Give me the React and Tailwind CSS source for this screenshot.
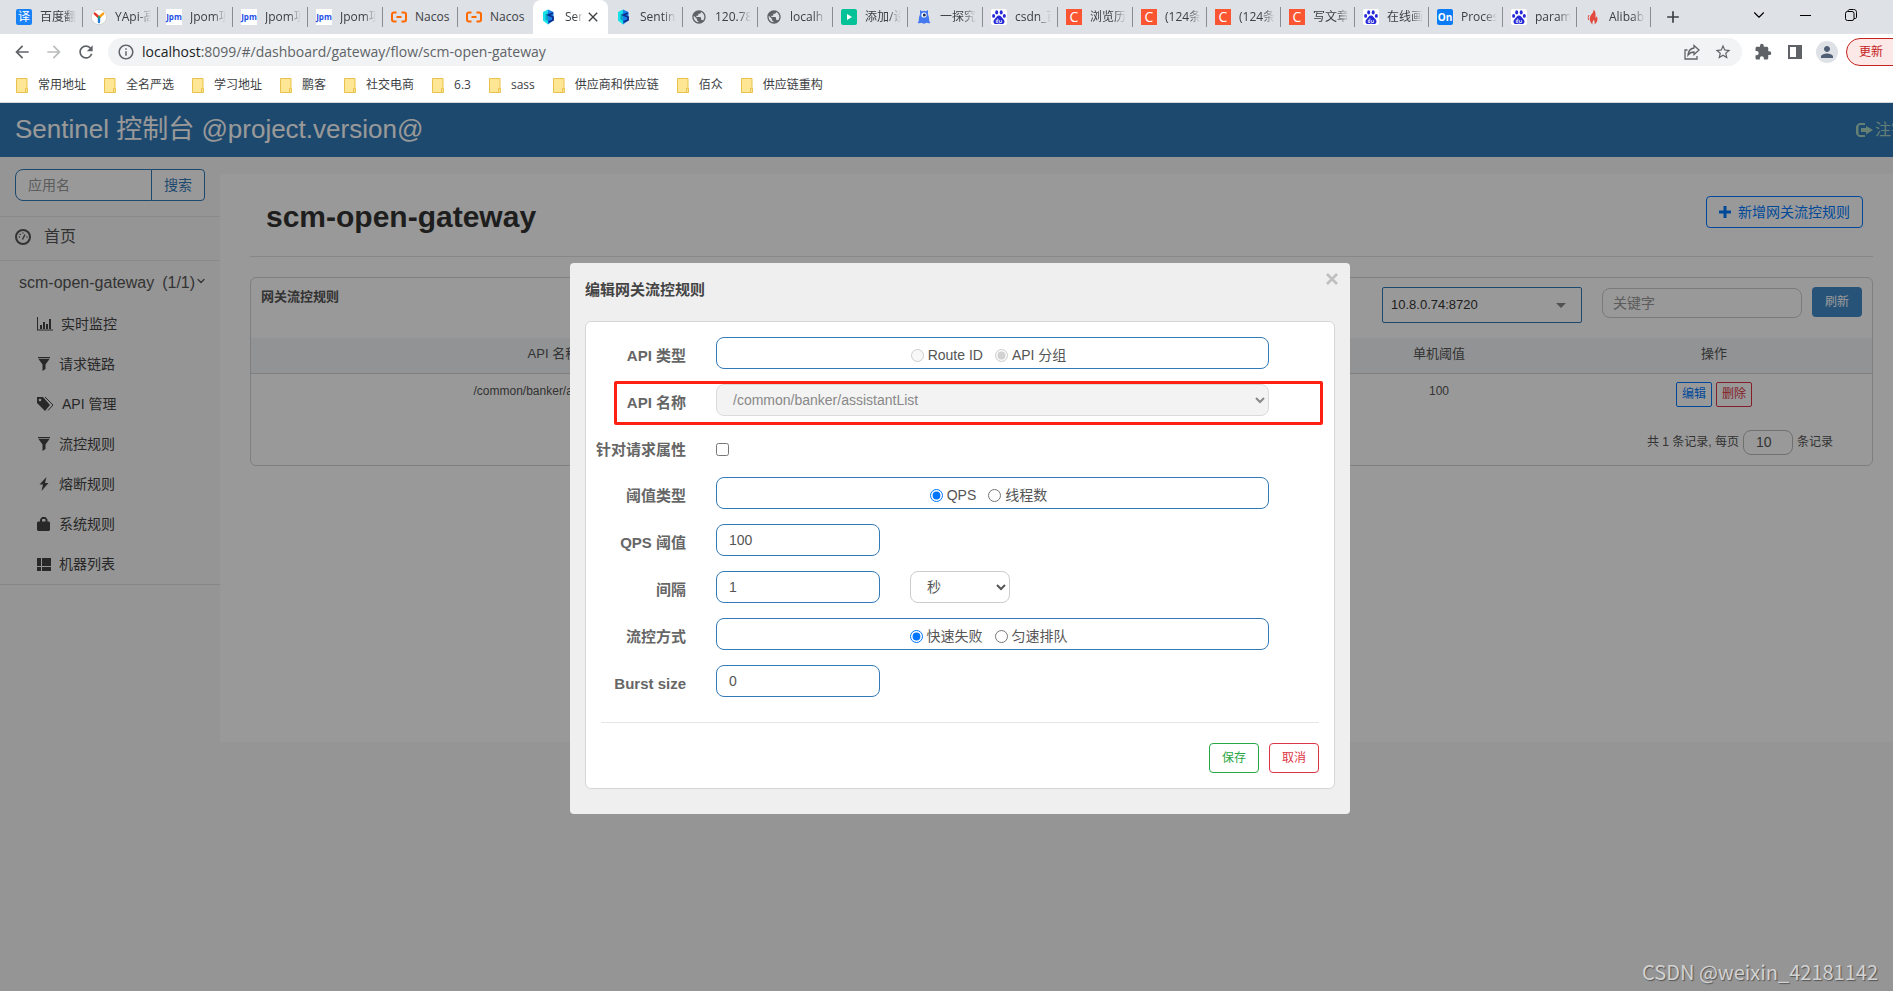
import { useState } from 'react'
import {
  MdArrowBack, MdArrowForward, MdRefresh, MdInfoOutline, MdStarBorder,
  MdExtension, MdPerson, MdPublic, MdAdd, MdClose,
} from 'react-icons/md'
import { ChevronDown } from 'lucide-react'

/* ---------- favicons ---------- */

function Letter({ bg, children }) {
  return (
    <span className={`flex h-4 w-4 items-center justify-center leading-4 text-white ${bg}`}>
      {children}
    </span>
  )
}

function Csdn() {
  return <Letter bg="bg-[#fc5531] text-[14px] font-medium">C</Letter>
}

function Baidu() {
  return (
    <svg viewBox="0 0 16 16" className="h-4 w-4">
      <rect width="16" height="16" rx="2" fill="#fff" />
      <g fill="#2529d8">
        <ellipse cx="5.7" cy="3.4" rx="1.5" ry="2.1" />
        <ellipse cx="10.2" cy="3.4" rx="1.5" ry="2.1" />
        <ellipse cx="2.6" cy="6.9" rx="1.5" ry="1.9" />
        <ellipse cx="13.3" cy="6.9" rx="1.5" ry="1.9" />
        <path d="M8 6.6c2.2 0 2.6 2 4.2 3.3 2.200 1.900 1.300 5.100-1 5.100-1.300 0-1.900-.3-3.200-.3s-1.900.3-3.200.3c-2.300 0-3.200-3.200-1-5.100C5.400 8.600 5.800 6.600 8 6.600z" />
      </g>
      <path d="M6.900 9.500v4M6.900 11.200H5.300v2.300h1.600M8.600 11.200v2.300h2v-2.300" fill="none" stroke="#fff" strokeWidth=".8" />
    </svg>
  )
}

function YApi() {
  return (
    <svg viewBox="0 0 16 16" className="h-4 w-4">
      <circle cx="8" cy="8" r="7.600" fill="#fff" stroke="#c4c4c4" strokeWidth=".6" />
      <path d="M8 8.500L3.800 4.600" stroke="#e5352b" strokeWidth="2.400" strokeLinecap="round" />
      <path d="M8 8.500l4.200-3.900" stroke="#f9a01b" strokeWidth="2.400" strokeLinecap="round" />
      <path d="M8 8.500V13" stroke="#1f7ad6" strokeWidth="2.400" strokeLinecap="round" />
      <circle cx="8" cy="8.500" r="1.200" fill="#22a565" />
    </svg>
  )
}

function Jpom() {
  return (
    <span className="flex h-4 w-4 items-center justify-center bg-white text-[8px] leading-4 font-bold text-[#2450e8]">
      Jpm
    </span>
  )
}

function Nacos() {
  return (
    <svg viewBox="0 0 16 16" className="h-4 w-4" fill="none" stroke="#ff6a00" strokeWidth="2">
      <path d="M5.500 3.500H3C1.600 3.500 1 4.200 1 5.500v5c0 1.300.6 2 2 2h2.500M10.500 3.500H13c1.400 0 2 .7 2 2v5c0 1.300-.6 2-2 2h-2.500M5.500 8h5" />
    </svg>
  )
}

function Sentinel() {
  return (
    <svg viewBox="0 0 16 16" className="h-4 w-4">
      <path d="M7 .5L2 3v8.500l5 4z" fill="#18e0e6" />
      <path d="M7 .5l5.500 2.500v8.500L7 15.500z" fill="#1783e8" />
      <path d="M4.500 5.500L7 4v8l-2.500-1.500z" fill="#0aa5c4" />
      <path d="M12 4L7.500 6l4.500 2v3l-4.500 2" fill="none" stroke="#0c2d8b" strokeWidth="1.800" />
    </svg>
  )
}

function Globe() {
  return <MdPublic className="h-[18px] w-[18px] text-[#5f6368]" />
}

function Play() {
  return (
    <svg viewBox="0 0 16 16" className="h-4 w-4">
      <rect width="16" height="16" rx="2" fill="#04c297" />
      <path d="M6 5v6l5-3z" fill="#fff" />
    </svg>
  )
}

function Monster() {
  return (
    <svg viewBox="0 0 16 16" className="h-4 w-4">
      <path d="M4 1l2 1.300a4.500 4.500 0 014 0L12 1v4.500c1 2 1.200 4.500 1.200 6.500l1.300 2-2 .3-1.700-.6-2.800 1-2.800-1-1.700.6-2-.3 1.300-2C2.800 10 3 7.500 4 5.500z" fill="#4478f0" />
      <circle cx="8" cy="6" r="2.600" fill="#fff" />
      <circle cx="8.300" cy="6" r="1.500" fill="#1d2b55" />
    </svg>
  )
}

function Flame() {
  return (
    <svg viewBox="0 0 16 16" className="h-4 w-4">
      <path d="M8.500.5c1 3-3.800 5-3.800 9.300 0 2.500 1.300 4.500 2.900 5.700-.6-2 .1-3.200 1.400-4.700.3 1.600 1 2.500.6 4.500 2-1.300 3.200-3.400 2.800-6-.2-1-.5-1.700-.9-2.300-.1 1-.5 1.500-1.100 1.900C10.700 5.500 10.800 2 8.500.5z" fill="#e2493f" />
      <path d="M4 6c-.8 1.600-.9 3.300-.3 5" fill="none" stroke="#e2493f" strokeWidth="1" />
    </svg>
  )
}

const tabs = [
  { icon: <Letter bg="rounded-xs bg-[#1a82f7] text-[12px]">译</Letter>, title: '百度翻' },
  { icon: <YApi />, title: 'YApi-高' },
  { icon: <Jpom />, title: 'Jpom项' },
  { icon: <Jpom />, title: 'Jpom项' },
  { icon: <Jpom />, title: 'Jpom项' },
  { icon: <Nacos />, title: 'Nacos', plain: true },
  { icon: <Nacos />, title: 'Nacos', plain: true },
  { icon: <Sentinel />, title: 'Sen', active: true },
  { icon: <Sentinel />, title: 'Sentin' },
  { icon: <Globe />, title: '120.78' },
  { icon: <Globe />, title: 'localh' },
  { icon: <Play />, title: '添加/设' },
  { icon: <Monster />, title: '一探究' },
  { icon: <Baidu />, title: 'csdn_百' },
  { icon: <Csdn />, title: '浏览历' },
  { icon: <Csdn />, title: '(124条' },
  { icon: <Csdn />, title: '(124条' },
  { icon: <Csdn />, title: '写文章' },
  { icon: <Baidu />, title: '在线画' },
  { icon: <Letter bg="rounded-xs bg-[#0a7cf5] font-bold text-[10px]">On</Letter>, title: 'Proces' },
  { icon: <Baidu />, title: 'param' },
  { icon: <Flame />, title: 'Alibab' },
]

const bookmarks = ['常用地址', '全名严选', '学习地址', '鹏客', '社交电商', '6.3', 'sass', '供应商和供应链', '佰众', '供应链重构']

function Tab({ icon, title, active, plain, divider, width }) {
  if (active) {
    return (
      <div className={`flex h-full items-center rounded-t-lg bg-white pl-2 ${width}`}>
        <span className="shrink-0">{icon}</span>
        <span className="ml-2 w-5 overflow-hidden whitespace-nowrap mask-r-from-50% mask-r-to-90%">{title}</span>
        <button type="button" aria-label="关闭标签页">
          <MdClose className="h-4 w-4 text-[#3c4043]" />
        </button>
      </div>
    )
  }
  return (
    <div className={`flex h-full items-center pl-2 ${width}`}>
      <span className="flex w-4 shrink-0 justify-center">{icon}</span>
      <span className={`ml-2 w-9 overflow-hidden whitespace-nowrap ${plain ? '' : 'mask-r-from-65% mask-r-to-100%'}`}>
        {title}
      </span>
      <span className={`ml-auto h-5 w-px ${divider ? 'bg-[#8a8d91]' : ''}`} />
    </div>
  )
}

function BrowserBar() {
  return (
    <header className="shrink-0 border-b border-[#d5d7da] bg-white font-['Open_Sans','Noto_Sans_CJK_SC',sans-serif] text-[12px] text-[#3c4043]">
      <div className="flex h-[34px] items-center bg-[#dee1e6] pl-2">
        <div className="flex h-full items-center">
          {tabs.map((tab, i) => (
            <Tab key={i} {...tab} width={i < 15 ? 'w-[75px]' : 'w-[74px]'} divider={!tabs[i + 1]?.active} />
          ))}
        </div>
        <div className="flex flex-1 items-center pb-1">
          <button type="button" aria-label="新标签页" className="mt-1 ml-3"><MdAdd className="h-5 w-5" /></button>
          <button type="button" aria-label="搜索标签页" className="ml-[67px]"><ChevronDown className="h-[18px] w-[18px] text-black" strokeWidth={1.5} /></button>
          <button type="button" aria-label="最小化" className="ml-8 h-px w-[11px] bg-black" />
          <button type="button" aria-label="还原" className="ml-[34px]">
            <svg viewBox="0 0 12 12" className="h-3 w-3" fill="none" stroke="#000">
              <rect x=".5" y="2.500" width="8.500" height="9" rx="2" />
              <path d="M3 2.500V2C3 1 4 .5 5 .5h3.500c2 0 3 1 3 3V8c0 1-.5 1.500-1.500 1.500H9" />
            </svg>
          </button>
          <button type="button" aria-label="关闭" className="ml-[34px]"><MdClose className="h-4 w-4 text-black" /></button>
        </div>
      </div>

      <div className="flex h-9 items-center pl-3 text-[#5f6368]">
        <button type="button" aria-label="后退"><MdArrowBack className="h-5 w-5" /></button>
        <button type="button" aria-label="前进" className="ml-3"><MdArrowForward className="h-5 w-5 text-[#babcbe]" /></button>
        <button type="button" aria-label="刷新页面" className="ml-3"><MdRefresh className="h-5 w-5" /></button>
        <div className="ml-3 flex h-7 flex-1 items-center rounded-full bg-[#f1f3f4] pr-[10px] pl-[9px]">
          <MdInfoOutline className="h-[18px] w-[18px]" />
          <p className="ml-[7px] flex-1 pb-px text-[14px]">
            <span className="text-[#202124]">localhost</span>:8099/#/dashboard/gateway/flow/scm-open-gateway
          </p>
          <button type="button" aria-label="分享">
            <svg viewBox="0 0 16 16" className="h-4 w-4" fill="none" stroke="#5f6368" strokeWidth="1.300">
              <path d="M3.500 6H1v9h12v-3M10 1.500l5 4.500-5 4.500V8c-3 0-4.500 1-6 3 .3-3.500 2.500-6.500 6-7z" />
            </svg>
          </button>
          <button type="button" aria-label="收藏" className="ml-[14px]"><MdStarBorder className="h-[18px] w-[18px]" /></button>
        </div>
        <button type="button" aria-label="扩展程序" className="ml-3"><MdExtension className="h-[18px] w-[18px]" /></button>
        <button type="button" aria-label="侧边栏" className="ml-4">
          <svg viewBox="0 0 14 14" className="h-[14px] w-[14px]">
            <path d="M0 0h14v14H0z" fill="#5f6368" />
            <path d="M2 2h6v10H2z" fill="#fff" />
          </svg>
        </button>
        <button type="button" aria-label="用户" className="ml-[14px] flex h-[22px] w-[22px] items-center justify-center rounded-full bg-[#dee1e6]">
          <MdPerson className="h-[18px] w-[18px] text-[#4f5d75]" />
        </button>
        <button type="button" className="ml-2 h-7 w-[74px] rounded-full border border-[#c5221f] bg-[#fce8e6] pl-3 text-left text-[#c5221f]">
          更新
        </button>
      </div>

      <nav className="flex h-8 items-center pb-[2px] pl-4">
        {bookmarks.map((name) => (
          <a key={name} href="#" className="mr-[18px] flex items-center whitespace-nowrap">
            <svg viewBox="0 0 12 15" className="mr-[10px] h-[15px] w-3">
              <path d="M.5.5h10.500v14H.5z" fill="#ffe694" stroke="#e8c24c" />
              <path d="M9.500 10.500h2v4h-2z" fill="#ffe694" stroke="#e8c24c" />
            </svg>
            {name}
          </a>
        ))}
      </nav>
    </header>
  )
}

/* ---------- sidebar ---------- */

const glyphs = {
  stats: (
    <svg viewBox="0 0 16 14" className="h-[14px] w-4" fill="currentColor">
      <path d="M0 0h1v12.500h15v1H0zM3 8h2v4H3zM6 5h2v7H6zM9 7h2v5H9zM12 2h2v10h-2z" />
    </svg>
  ),
  filter: (
    <svg viewBox="0 0 14 14" className="h-[14px] w-[14px]" fill="currentColor">
      <path d="M1 0h12v1.200H1zM1.500 2h11L8.500 7.500V12L5.500 14V7.500z" />
    </svg>
  ),
  tags: (
    <svg viewBox="0 0 17 14" className="h-[14px] w-[17px]" fill="currentColor">
      <path fillRule="evenodd" d="M0 0h6l7 8-5 6-8-8zM3 1.700a1.300 1.300 0 100 2.600 1.300 1.300 0 000-2.600z" />
      <path d="M8 0l8 8-5 5.500" fill="none" stroke="currentColor" />
    </svg>
  ),
  flash: (
    <svg viewBox="0 0 14 14" className="h-[14px] w-[14px]" fill="currentColor">
      <path d="M9.500 0L2.500 7.500h3.500L4.500 14l7-8H8z" />
    </svg>
  ),
  lock: (
    <svg viewBox="0 0 14 14" className="h-[14px] w-[14px]" fill="currentColor">
      <path fillRule="evenodd" d="M3 4.500V2.500L5 0h3.500l2 2.500v2H12l1 1V13l-1 1H1l-1-1V5.500l1-1zM5 4.500h3.500V2.800L8 2H5.500L5 2.800z" />
    </svg>
  ),
  list: (
    <svg viewBox="0 0 14 14" className="h-[14px] w-[14px]" fill="currentColor">
      <path d="M0 1h4v8H0zM5 1h9v8H5zM0 10h4v4H0zM5 10h9v4H5z" />
    </svg>
  ),
}

const menu = [
  ['stats', '实时监控'],
  ['filter', '请求链路'],
  ['tags', 'API 管理'],
  ['filter', '流控规则'],
  ['flash', '熔断规则'],
  ['lock', '系统规则'],
  ['list', '机器列表'],
]

function Sidebar() {
  return (
    <aside className="w-[220px] shrink-0">
      <form className="flex px-[15px] pt-3 pb-[15px]">
        <input
          type="text"
          aria-label="应用名"
          placeholder="应用名"
          className="h-8 min-w-0 flex-1 rounded-l-lg border border-[#337ab7] bg-white px-3 text-[14px] placeholder:text-[#999]"
        />
        <button type="button" className="-ml-px h-8 w-[54px] rounded-r border border-[#337ab7] bg-white text-[14px] text-[#337ab7]">
          搜索
        </button>
      </form>
      <nav className="border-b border-[#e0e0e0] text-[#555]">
        <a href="#" className="flex h-[45px] items-center border-y border-[#e7e7e7] pb-1 pl-[15px] text-[16px]">
          <svg viewBox="0 0 16 16" className="mr-[13px] h-4 w-4" fill="none" stroke="currentColor">
            <circle cx="8" cy="8" r="7" strokeWidth="2" />
            <path d="M7.500 10.500l2.500-5M3.800 8h1.200M11.500 8h1M4.800 5l.8.8M8 3.500v1" strokeWidth="1.400" />
          </svg>
          首页
        </a>
        <a href="#" className="flex h-[43px] items-center pl-[19px] text-[16px]">
          scm-open-gateway
          <span className="ml-2">(1/1)</span>
          <ChevronDown className="-mt-1 h-3 w-3" strokeWidth={2.5} />
        </a>
        <ul>
          {menu.map(([icon, text]) => (
            <li key={text}>
              <a href="#" className="flex h-10 items-center gap-2 pl-[37px] text-[14px] text-[#444]">
                {glyphs[icon]}
                {text}
              </a>
            </li>
          ))}
        </ul>
      </nav>
    </aside>
  )
}

/* ---------- rules page ---------- */

function RulesPage() {
  return (
    <main className="mt-[17px] min-h-[568px] flex-1 bg-white pr-[47px] pl-[30px] text-[#555]">
      <div className="flex h-[83px] items-start justify-between border-b border-[#e2e2e2] pr-[10px] pl-4">
        <h1 className="mt-[25px] text-[30px] leading-9 font-bold text-[#333]">scm-open-gateway</h1>
        <button type="button" className="mt-[22px] flex h-8 items-center rounded border border-[#007bff] px-3 text-[14px] text-[#007bff]">
          <svg viewBox="0 0 12 12" className="mr-[7px] h-3 w-3" fill="currentColor">
            <path d="M4.500 0h3v4.500H12v3H7.500V12h-3V7.500H0v-3h4.500z" />
          </svg>
          新增网关流控规则
        </button>
      </div>

      <section className="mt-5 rounded-md border border-[#d4d4d4]">
        <div className="flex h-[60px] items-start pr-[10px] pl-[10px]">
          <h2 className="mt-[9px] text-[13px] font-bold">网关流控规则</h2>
          <select aria-label="机器" className="mt-[9px] ml-auto h-9 w-[200px] appearance-none rounded-xs border border-[#337ab7] px-2 text-[13px] text-[#333]">
            <option>10.8.0.74:8720</option>
          </select>
          <svg viewBox="0 0 10 5" className="mt-[25px] -ml-[26px] h-[5px] w-[10px]" fill="#888"><path d="M0 0h10L5 5z" /></svg>
          <input
            type="text"
            aria-label="关键字"
            placeholder="关键字"
            className="mt-[10px] ml-9 h-[30px] w-[200px] rounded-lg border border-[#ccc] px-[10px] text-[14px] placeholder:text-[#999]"
          />
          <button type="button" className="mt-[9px] ml-[10px] h-[30px] w-[50px] rounded bg-[#428bca] text-[12px] text-white">
            刷新
          </button>
        </div>
        <table className="w-full table-fixed text-center">
          <thead>
            <tr className="h-[35px] border-b border-[#d4d4d4] bg-[#f3f6f8] text-[13px]">
              <th className="w-[37%] pb-1 pl-1 font-normal">API 名称</th>
              <td colSpan={2} />
              <th className="w-[234px] pb-1 font-normal">单机阈值</th>
              <th className="w-[316px] pb-1 font-normal">操作</th>
            </tr>
          </thead>
          <tbody>
            <tr className="h-[46px] align-top text-[12px]">
              <td className="pt-2 pl-1">/common/banker/assistantList</td>
              <td colSpan={2} />
              <td className="pt-2">100</td>
              <td className="pt-2">
                <span className="flex justify-center gap-1">
                  <button type="button" className="h-[25px] w-9 rounded-xs border border-[#007bff] text-[#007bff]">编辑</button>
                  <button type="button" className="h-[25px] w-9 rounded-xs border border-[#dc3545] text-[#dc3545]">删除</button>
                </span>
              </td>
            </tr>
          </tbody>
        </table>
        <div className="flex h-[46px] items-center justify-end gap-1 pr-[39px] text-[12px]">
          <label htmlFor="pageSize">共 1 条记录, 每页</label>
          <input
            id="pageSize"
            type="text"
            defaultValue="10"
            className="h-[25px] w-[50px] rounded-lg border border-[#bbb] px-3 text-[14px]"
          />
          <span>条记录</span>
        </div>
      </section>
    </main>
  )
}

/* ---------- edit dialog ---------- */

function Field({ label, htmlFor, highlight, children }) {
  return (
    <div className="relative flex min-h-[31px]">
      <label htmlFor={htmlFor} className="w-[100px] shrink-0 pt-2 text-right text-[15px] leading-[22px] font-bold text-[#666]">
        {label}
      </label>
      <div className="mr-[65px] ml-[30px] flex flex-1">{children}</div>
      {highlight && (
        <span className="pointer-events-none absolute -top-[3px] right-[11px] -bottom-[9px] left-7 rounded-xs border-3 border-[#ff2012]" />
      )}
    </div>
  )
}

function RadioBox({ name, options, value, onChange, disabled }) {
  return (
    <div className="flex h-8 flex-1 items-center justify-center gap-3 rounded-lg border border-[#337ab7] pt-1 pr-2 text-[14px] text-[#555]">
      {options.map((opt) => (
        <label key={opt} className="flex items-center gap-1">
          <input
            type="radio"
            name={name}
            className="h-[13px] w-[13px]"
            checked={value === opt}
            onChange={() => onChange(opt)}
            disabled={disabled}
          />
          {opt}
        </label>
      ))}
    </div>
  )
}

function EditDialog() {
  const [form, setForm] = useState({
    apiType: 'API 分组',
    byParam: false,
    grade: 'QPS',
    count: '100',
    interval: '1',
    unit: '秒',
    behavior: '快速失败',
    burst: '0',
  })
  const set = (key) => (value) => setForm((f) => ({ ...f, [key]: value }))

  const inputClass = 'h-8 w-[164px] rounded-lg border border-[#337ab7] px-3 text-[14px] text-[#555]'

  return (
    <div role="dialog" aria-label="编辑网关流控规则" className="w-[780px] rounded bg-[#efefef] px-[15px] pb-[25px]">
      <div className="flex h-[58px] items-start justify-between">
        <h2 className="mt-4 text-[15px] font-bold text-[#444]">编辑网关流控规则</h2>
        <button type="button" aria-label="关闭对话框" className="mt-[9px] -mr-1">
          <svg viewBox="0 0 12 12" className="m-[1px] h-3 w-3" stroke="#bfbfbf" strokeWidth="2.600">
            <path d="M1 1l10 10M11 1L1 11" />
          </svg>
        </button>
      </div>
      <form className="rounded-md border border-[#d6d6d6] bg-white pt-[15px] pb-[15px]">
        <div className="flex flex-col gap-[15px]">
          <Field label="API 类型">
            <RadioBox name="apiType" options={['Route ID', 'API 分组']} value={form.apiType} onChange={set('apiType')} disabled />
          </Field>
          <Field label="API 名称" htmlFor="apiName" highlight>
            <select id="apiName" disabled className="h-8 flex-1 rounded-lg border border-[#dbdbdb] bg-[#f3f3f3] px-3 text-[14px] text-[#888]">
              <option>/common/banker/assistantList</option>
            </select>
          </Field>
          <Field label="针对请求属性" htmlFor="byParam">
            <input
              id="byParam"
              type="checkbox"
              className="mt-3 h-[13px] w-[13px]"
              checked={form.byParam}
              onChange={(e) => set('byParam')(e.target.checked)}
            />
          </Field>
          <Field label="阈值类型">
            <RadioBox name="grade" options={['QPS', '线程数']} value={form.grade} onChange={set('grade')} />
          </Field>
          <Field label="QPS 阈值" htmlFor="count">
            <input id="count" type="text" className={inputClass} value={form.count} onChange={(e) => set('count')(e.target.value)} />
          </Field>
          <Field label="间隔" htmlFor="interval">
            <input id="interval" type="text" className={inputClass} value={form.interval} onChange={(e) => set('interval')(e.target.value)} />
            <select
              aria-label="时间单位"
              className="ml-[30px] h-8 w-[100px] rounded-lg border border-[#ccc] bg-white px-3 text-[14px] text-[#555]"
              value={form.unit}
              onChange={(e) => set('unit')(e.target.value)}
            >
              <option>秒</option>
            </select>
          </Field>
          <Field label="流控方式">
            <RadioBox name="behavior" options={['快速失败', '匀速排队']} value={form.behavior} onChange={set('behavior')} />
          </Field>
          <Field label="Burst size" htmlFor="burst">
            <input id="burst" type="text" className={inputClass} value={form.burst} onChange={(e) => set('burst')(e.target.value)} />
          </Field>
        </div>
        <div className="mx-[15px] mt-[25px] flex justify-end gap-[10px] border-t border-[#e5e5e5] pt-5">
          <button type="button" className="h-[30px] w-[50px] rounded border border-[#28a745] text-[12px] text-[#28a745]">保存</button>
          <button type="button" className="h-[30px] w-[50px] rounded border border-[#dc3545] text-[12px] text-[#dc3545]">取消</button>
        </div>
      </form>
    </div>
  )
}

export default function App() {
  return (
    <div className="overflow-hidden">
      {/* the window runs a little past the right edge of the viewport */}
      <div className="flex min-h-screen w-[calc(100%+27px)] flex-col">
        <BrowserBar />
        <div className="relative flex flex-1 flex-col bg-[#f8f8f8] font-['Liberation_Sans','Noto_Sans_CJK_SC',sans-serif]">
          <div className="flex h-[54px] items-center justify-between bg-[#337ab7] pr-[13px] pl-[15px] text-white">
            <span className="pb-[3px] text-[26px] leading-8">Sentinel 控制台 @project.version@</span>
            <a href="#" className="flex items-center gap-[2px] text-[16px] text-[#a9d5c4]">
              <svg viewBox="0 0 17 14" className="h-[14px] w-[17px]" fill="currentColor">
                <path d="M9 0v2H3.500L2.500 3v8l1 1H9v2H3l-3-3V3l3-3zM10 3l7 4-7 4.500V9H5V5h5z" />
              </svg>
              注销
            </a>
          </div>
          <div className="flex">
            <Sidebar />
            <RulesPage />
          </div>

          <div className="absolute inset-0 flex items-start justify-center bg-black/40 pt-40">
            <EditDialog />
          </div>
          <span className="absolute right-[42px] bottom-1 font-['Noto_Sans_CJK_SC',sans-serif] text-[20px] text-[#d2d2d2] text-shadow-[1px_1px_1px_#555]">
            CSDN @weixin_42181142
          </span>
        </div>
      </div>
    </div>
  )
}
